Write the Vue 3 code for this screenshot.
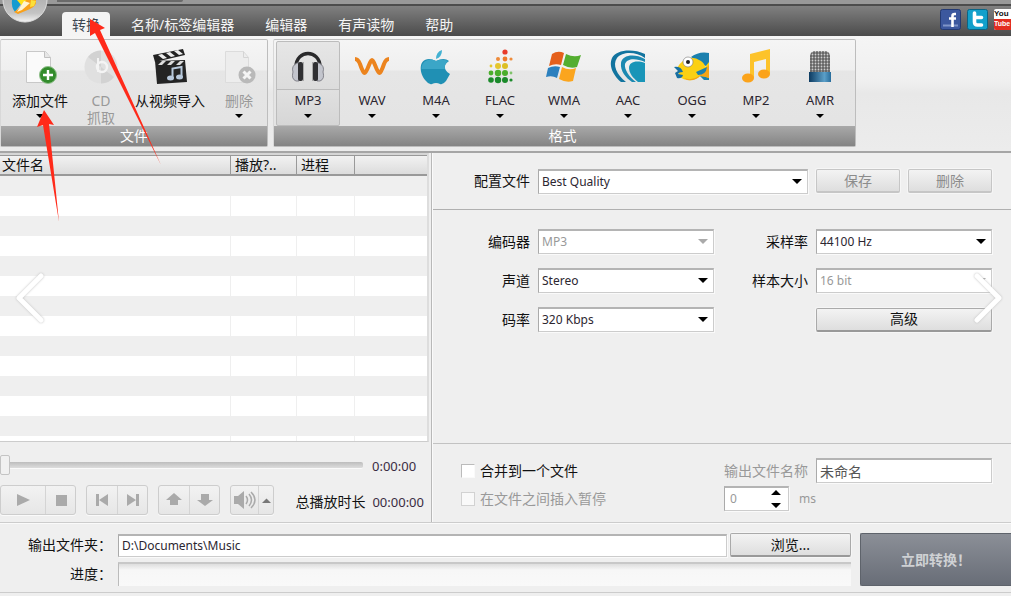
<template>
  <div class="app">
    <!-- title bar and tabs -->
    <header class="top">
      <div class="title-strip"><div class="title-slot"></div></div>
      <div class="tab-bar">
        <nav class="tabs">
          <button v-for="tab in tabs" :key="tab" class="tab" :class="{ active: tab === activeTab }" @click="activeTab = tab">
            {{ tab }}
          </button>
        </nav>
        <div class="social">
          <a href="#" aria-label="Facebook">
            <svg width="21" height="21" viewBox="0 0 21 21">
              <rect x="0.5" y="0.5" width="20" height="20" rx="2" fill="#3c589e" stroke="#243a72" />
              <path d="M3 16.5h15" stroke="#7f95c8" stroke-width="2" />
              <path d="M16 5h-1.500q-2 0-2 2v11M9 9.500h7" fill="none" stroke="#fff" stroke-width="2.600" />
            </svg>
          </a>
          <a href="#" aria-label="Twitter">
            <svg width="21" height="21" viewBox="0 0 21 21">
              <rect x="0.5" y="0.5" width="20" height="20" rx="2" fill="#12a0cb" stroke="#0b6585" />
              <path d="M7.500 4v9q0 3 3 3h4M7.500 8.500h7" fill="none" stroke="#fff" stroke-width="3.600" stroke-linecap="round" />
            </svg>
          </a>
          <a href="#" class="youtube" aria-label="YouTube"><span>You</span><span class="tube">Tube</span></a>
        </div>
      </div>
      <svg class="logo" width="46" height="24" viewBox="0 0 46 24">
        <defs>
          <linearGradient id="orb" x1="0" y1="0" x2="0" y2="1">
            <stop offset="0" stop-color="#999" />
            <stop offset="0.8" stop-color="#c4c4c4" />
            <stop offset="1" stop-color="#f4f4f4" />
          </linearGradient>
        </defs>
        <circle cx="23" cy="0" r="22" fill="url(#orb)" stroke="#ddd" stroke-width="1" />
        <path d="M10 0h12L13 12Q9 7 10 0z" fill="#159bd0" />
        <path d="M15 0h10l-5 6z" fill="#ffe11a" />
        <path d="M24 0h10q1 6-6 9l-12 5-4-2 9-6z" fill="#f9a11b" />
        <path d="M22 1l6 2-8 7-5 2z" fill="#fff3d0" />
        <path d="M29 0l5 1-2 5-4 1z" fill="#fbe03a" />
      </svg>
    </header>

    <!-- ribbon -->
    <section class="ribbon">
      <div class="group">
        <div class="group-items">
          <button class="tool tool-wide">
            <svg class="tool-icon" width="36" height="36" viewBox="0 0 36 36">
              <path d="M4.500 1.500h19l5 6v25h-24z" fill="#fafafa" stroke="#c8c8c8" />
              <path d="M22.500 1.500v6h6" fill="#e6e6e6" stroke="#c0c0c0" />
              <circle cx="26" cy="25" r="8.500" fill="#338c2c" stroke="#8fbf8a" />
              <path d="M26 20v10M21 25h10" stroke="#fff" stroke-width="2.400" />
            </svg>
            <span class="tool-text">添加文件</span>
            <i class="caret"></i>
          </button>
          <button class="tool" disabled>
            <svg class="tool-icon" width="36" height="36" viewBox="0 0 36 36">
              <circle cx="18" cy="17" r="16.500" fill="#e0e0e0" />
              <path d="M18 17L5 7A16.500 16.500 0 0 1 18 0.500zM18 17l13 10A16.500 16.500 0 0 1 18 33.500z" fill="#d2d2d2" />
              <path d="M15 8v14" stroke="#f4f4f4" stroke-width="2" />
              <circle cx="19" cy="17" r="5" fill="none" stroke="#f4f4f4" stroke-width="2.400" />
            </svg>
            <span class="tool-text">CD<br />抓取</span>
          </button>
          <button class="tool tool-video">
            <svg class="tool-icon" width="36" height="36" viewBox="0 0 36 36">
              <path d="M1 5l30-6 2 6-30 7z" fill="#222" />
              <path d="M6 5l5 4 4-1-5-4zM14 3l5 4 4-1-5-4zM22 1l5 4 4-1-5-4z" fill="#eee" />
              <path d="M3 11l30-1 2 22-30 2z" fill="#242424" />
              <path d="M6 15l4-4h4l-4 4zM15 15l4-4h4l-4 4zM24 15l4-4h4l-4 4z" fill="#ddd" />
              <path d="M20.500 28V18.500l9-1.500v10" fill="none" stroke="#b8c9dc" stroke-width="2" />
              <ellipse cx="18.500" cy="28" rx="3.500" ry="2.500" fill="#b8c9dc" />
              <ellipse cx="27.500" cy="27" rx="3.500" ry="2.500" fill="#b8c9dc" />
            </svg>
            <span class="tool-text">从视频导入</span>
          </button>
          <button class="tool" disabled>
            <svg class="tool-icon" width="36" height="36" viewBox="0 0 36 36">
              <path d="M4.500 1.500h18l5 6v25h-23z" fill="#ededed" stroke="#dcdcdc" />
              <path d="M22.500 1.500v6h5" fill="none" stroke="#d4d4d4" />
              <circle cx="26" cy="25" r="8.500" fill="#b9b9b9" />
              <path d="M22.500 21.500l7 7M29.500 21.500l-7 7" stroke="#f5f5f5" stroke-width="3" />
            </svg>
            <span class="tool-text">删除</span>
            <i class="caret"></i>
          </button>
        </div>
        <div class="group-title">文件</div>
      </div>

      <div class="group formats">
        <div class="group-items">
          <button v-for="f in formats" :key="f" class="tool format" :class="{ active: f === activeFormat }" @click="activeFormat = f">
            <svg class="tool-icon" width="36" height="36" viewBox="0 0 36 36">
              <g v-if="f === 'MP3'">
                <path d="M6 17C6-1 30-1 30 17" fill="none" stroke="#29292b" stroke-width="3.500" />
                <path d="M7 13q-6 3-4 9-2 7 3 9h3V13zM29 13q6 3 4 9 2 7-3 9h-3V13z" fill="#c3c5cd" stroke="#85858d" />
                <rect x="8" y="12" width="5" height="19" rx="2" fill="#303033" />
                <rect x="23" y="12" width="5" height="19" rx="2" fill="#303033" />
                <path d="M13.500 12v19M22.500 12v19" stroke="#aaa" />
              </g>
              <path v-else-if="f === 'WAV'" d="M1 9Q4 9 6 14Q9 23 10.500 23Q12 23 15 15Q17 10 18 10Q19 10 21 15Q24 23 25.500 23Q27 23 30 14Q32 9 35 9" fill="none" stroke="#ec841e" stroke-width="4" />
              <g v-else-if="f === 'M4A'">
                <path d="M18 11q-4-2-7-2C0 9 1 24 8 31q3 4 6 3 4-2 8 0 3 1 6-3l4-7q-6-3-5-9 1-2 4-4-5-4-13 0z" fill="#2090b4" />
                <path d="M3.500 19c0-8 8-12 14.500-8q6-3 12 0-4 4-3 8z" fill="#3ba6c7" />
                <path d="M18 9q0-7 6-9 0 7-6 9z" fill="#42b1d2" />
              </g>
              <g v-else-if="f === 'FLAC'">
                <circle v-for="(d, i) in flacDots" :key="i" :cx="d[0]" :cy="d[1]" :r="d[2]" :fill="d[3]" />
              </g>
              <g v-else-if="f === 'WMA'">
                <path d="M6 4q6-4 12-1l-3 12q-6-2-12 1z" fill="#e5601c" />
                <path d="M20 4q8 4 15 1l-4 12q-7 2-14-2z" fill="#54ae30" />
                <path d="M2 18q6-3 12-1l-3 11q-5-3-11-1z" fill="#2c80be" />
                <path d="M16 17q7 4 14 1l-3 13q-7 2-14-2z" fill="#fba51e" />
              </g>
              <g v-else-if="f === 'AAC'">
                <path d="M35 4C22-2 6 0 2 8c-4 9 3 19 9 24h5C7 25 2 15 7 8 12 2 25 1 35 8z" fill="#12749f" />
                <path d="M35 9C24 3 12 5 11 13c-1 8 5 15 11 19h4C19 27 14 19 15 14c2-6 11-6 20-2z" fill="#1c89b1" />
                <path d="M35 13c-9-3-16-1-16 5 0 5 4 10 9 14h7z" fill="#1995b8" />
              </g>
              <g v-else-if="f === 'OGG'">
                <path d="M17 7q8-6 18-4v14l-9-3zM25 25l5 5h5v-9z" fill="#1b80ae" />
                <path d="M3 18Q13 2 27 11q4 3 4 6l4-5v16q-5-2-9-2-4 5-13 4-7-1-8-6z" fill="#fbd013" />
                <path d="M10 28q8 3 15-2l10-11v13q-5-2-9-2-4 5-13 4z" fill="#f5a416" />
                <path d="M0 17q7-1 9 5-4 0-5 2l5 1q-1 4-6 3l-2-5 3-2z" fill="#176fa1" />
                <path d="M22 22l11-5q-1 8-9 8z" fill="#1b80ae" />
                <circle cx="14" cy="12" r="5" fill="#fff" stroke="#777" stroke-width="0.600" />
                <circle cx="14" cy="12" r="2" fill="#222" />
              </g>
              <g v-else-if="f === 'MP2'">
                <path d="M12 4l20-5v25h-4V9L16 12v16h-4z" fill="#fdc32a" />
                <ellipse cx="10" cy="28" rx="6" ry="4.500" fill="#fba31a" />
                <ellipse cx="26" cy="24" rx="6" ry="4.500" fill="#fba31a" />
              </g>
              <g v-else>
                <defs>
                  <pattern id="mesh" width="3" height="3" patternUnits="userSpaceOnUse">
                    <rect width="3" height="3" fill="#636363" />
                    <circle cx="1.500" cy="1.500" r="0.900" fill="#cfcfcf" />
                  </pattern>
                  <linearGradient id="mic-base">
                    <stop offset="0" stop-color="#0d3b61" />
                    <stop offset="0.7" stop-color="#5b9fc8" />
                    <stop offset="1" stop-color="#286c9b" />
                  </linearGradient>
                </defs>
                <rect x="8" y="1" width="20" height="26" rx="5" fill="url(#mesh)" />
                <rect x="7" y="22" width="22" height="10" fill="url(#mic-base)" />
              </g>
            </svg>
            <span class="tool-text latin">{{ f }}</span>
            <i class="caret"></i>
          </button>
        </div>
        <div class="group-title">格式</div>
      </div>
    </section>

    <main class="main">
      <!-- file list and player -->
      <section class="left">
        <div class="list">
          <table>
            <thead>
              <tr>
                <th class="col-name">文件名</th>
                <th class="col-play">播放?..</th>
                <th class="col-progress">进程</th>
                <th></th>
              </tr>
            </thead>
            <tbody>
              <tr v-for="n in 14" :key="n"><td></td><td></td><td></td><td></td></tr>
            </tbody>
          </table>
        </div>
        <div class="player">
          <div class="seek">
            <input v-model="position" class="slider" type="range" min="0" max="100" aria-label="播放位置" />
            <span class="time">0:00:00</span>
          </div>
          <div class="controls">
            <div class="btn-group">
              <button class="wide" aria-label="播放"><svg width="16" height="16" viewBox="0 0 16 16"><path d="M2 2l13 6-13 6z" /></svg></button>
              <button aria-label="停止"><svg width="16" height="16" viewBox="0 0 16 16"><path d="M3 3h11v11H3z" /></svg></button>
            </div>
            <div class="btn-group">
              <button aria-label="上一个"><svg width="16" height="16" viewBox="0 0 16 16"><path d="M2 2h3v12H2zM14 2v12L5 8z" /></svg></button>
              <button aria-label="下一个"><svg width="16" height="16" viewBox="0 0 16 16"><path d="M14 2h-3v12h3zM2 2v12l9-6z" /></svg></button>
            </div>
            <div class="btn-group">
              <button aria-label="上移"><svg width="16" height="16" viewBox="0 0 16 16"><path d="M8 1l8 7h-4v5H4V8H0z" /></svg></button>
              <button aria-label="下移"><svg width="16" height="16" viewBox="0 0 16 16"><path d="M8 14L0 8h4V2h8v6h4z" /></svg></button>
            </div>
            <div class="btn-group volume">
              <button aria-label="音量">
                <svg width="22" height="18" viewBox="0 0 22 18">
                  <path d="M0 5h4l6-5v18l-6-5H0z" />
                  <path d="M12 5q3 4 0 8M15 3q5 6 0 12M17 1q8 8 0 16" fill="none" stroke="#aaa" stroke-width="1.500" />
                </svg>
              </button>
              <button class="narrow" aria-label="音量菜单"><svg width="9" height="5" viewBox="0 0 9 5"><path d="M0 5l4.500-4.500L9 5z" fill="#777" /></svg></button>
            </div>
            <div class="total">
              <span>总播放时长</span>
              <span class="time">00:00:00</span>
            </div>
          </div>
        </div>
      </section>

      <!-- encoder settings -->
      <section class="right">
        <div class="profile">
          <label for="profile">配置文件</label>
          <div class="select">
            <select id="profile"><option>Best Quality</option></select>
            <i class="caret big"></i>
          </div>
          <button class="btn" disabled>保存</button>
          <button class="btn" disabled>删除</button>
        </div>
        <div class="settings">
          <template v-for="s in settings" :key="s.id">
            <label :for="s.id">{{ s.label }}</label>
            <div class="select">
              <select :id="s.id" :disabled="s.disabled"><option>{{ s.value }}</option></select>
              <i class="caret big" :class="{ off: s.disabled }"></i>
            </div>
          </template>
          <button class="btn advanced">高级</button>
        </div>
        <div class="merge">
          <label class="check"><input type="checkbox" />合并到一个文件</label>
          <div class="out-name">
            <label for="out-name" class="muted">输出文件名称</label>
            <input id="out-name" v-model="outName" class="field" type="text" />
          </div>
          <label class="check muted"><input type="checkbox" disabled />在文件之间插入暂停</label>
          <div class="pause">
            <div class="spin">
              <input v-model="pause" type="text" aria-label="暂停" disabled />
              <svg width="10" height="18" viewBox="0 0 10 18"><path d="M0 5l5-5 5 5zM0 13l5 5 5-5z" /></svg>
            </div>
            <span class="muted unit">ms</span>
          </div>
        </div>
      </section>
    </main>

    <!-- output -->
    <footer class="output">
      <div class="output-grid">
        <label for="folder">输出文件夹：</label>
        <input id="folder" v-model="folder" class="field" type="text" />
        <button class="btn">浏览...</button>
        <span class="progress-label">进度：</span>
        <div class="progress" role="progressbar" aria-label="进度"></div>
      </div>
      <button class="convert">立即转换！</button>
    </footer>

    <!-- overlay: pointers and carousel arrows -->
    <svg class="pointers" width="170" height="230" viewBox="0 0 170 230">
      <path d="M90 19l15 9-5 2 61 135L95 33l-5 3z" />
      <path d="M44 110l10 15-5-1 10 98L43 125l-6 2z" />
    </svg>
    <button class="chevron prev" aria-label="上一张">
      <svg width="36" height="56" viewBox="0 0 36 56"><path d="M30 6L8 28l22 22" /></svg>
    </button>
    <button class="chevron next" aria-label="下一张">
      <svg width="36" height="56" viewBox="0 0 36 56"><path d="M6 6l22 22L6 50" /></svg>
    </button>
  </div>
</template>

<script setup>
import { ref } from 'vue'

const tabs = ['转换', '名称/标签编辑器', '编辑器', '有声读物', '帮助']
const activeTab = ref('转换')

const formats = ['MP3', 'WAV', 'M4A', 'FLAC', 'WMA', 'AAC', 'OGG', 'MP2', 'AMR']
const activeFormat = ref('MP3')

const settings = [
  { id: 'codec', label: '编码器', value: 'MP3', disabled: true },
  { id: 'rate', label: '采样率', value: '44100 Hz', disabled: false },
  { id: 'channels', label: '声道', value: 'Stereo', disabled: false },
  { id: 'size', label: '样本大小', value: '16 bit', disabled: true },
  { id: 'bitrate', label: '码率', value: '320 Kbps', disabled: false }
]

// x, y, 半径, 颜色
const flacDots = [
  [23, 2, 2.6, '#e83b2b'],
  [16, 9, 2, '#ee8b3a'], [23, 9, 2.4, '#ee7a2b'], [29, 9, 1.6, '#ee8b3a'],
  [9, 16, 1.4, '#e5c62d'], [16, 16, 3, '#e5c62d'], [23, 16, 3, '#dcbf25'],
  [9, 23, 2.4, '#4aae2c'], [16, 23, 3.2, '#4aae2c'], [23, 23, 3, '#4aae2c'], [29, 23, 1.4, '#7fc36a'],
  [9, 30, 2.8, '#1b8a2b'], [16, 30, 3.2, '#1b8a2b'], [23, 30, 3, '#1b8a2b'], [29, 30, 1.6, '#1b8a2b']
]

const position = ref(0)
const outName = ref('未命名')
const pause = ref('0')
const folder = ref('D:\\Documents\\Music')
</script>

<style>
body {
  margin: 0;
  background: #efefef;
}
</style>

<style scoped>
.app {
  position: relative;
  display: flex;
  flex-direction: column;
  min-height: 100vh;
  overflow: hidden;
  background: #efefef;
  color: #111;
  font-family: "Noto Sans", "Noto Sans CJK SC", sans-serif;
  font-size: 14px;
  line-height: 20px;
}

.app * {
  box-sizing: border-box;
}

button,
input,
select {
  margin: 0;
  font: inherit;
  color: inherit;
}

/* 顶部 */
.top {
  position: relative;
}

.title-strip {
  height: 6px;
  padding-left: 57px;
  background: #999;
  border-bottom: 2px solid #4d4d4d;
}

.title-slot {
  width: 126px;
  height: 2px;
  border-radius: 0 0 6px 0;
  background: #6a6a6a;
}

.tab-bar {
  display: flex;
  justify-content: space-between;
  height: 30px;
  padding-left: 62px;
  background: linear-gradient(#808080, #4b4b4b);
}

.tabs {
  display: flex;
  align-items: flex-end;
  gap: 11px;
}

.tab {
  height: 24px;
  padding: 3px 10px 1px;
  border: 0;
  background: none;
  color: #f4f4f4;
  white-space: nowrap;
}

.tab.active {
  border-radius: 4px 4px 0 0;
  background: #f4f4f4;
  color: #3c4650;
}

.social {
  display: flex;
  gap: 6px;
  padding-top: 3px;
}

.social a {
  display: block;
  height: 21px;
}

.social svg {
  display: block;
}

.youtube {
  width: 17px;
  overflow: hidden;
  border-radius: 2px 0 0 2px;
  background: #fff;
  color: #111;
  font-family: "Liberation Sans", sans-serif;
  font-size: 8px;
  font-weight: 700;
  line-height: 10px;
  text-decoration: none;
}

.youtube span {
  display: block;
}

.youtube .tube {
  height: 11px;
  background: #e22d20;
  color: #fff;
  font-size: 7px;
}

.logo {
  position: absolute;
  top: 0;
  left: 2px;
}

/* 功能区 */
.ribbon {
  display: flex;
  gap: 5px;
  padding: 3px 0 4px;
  background: linear-gradient(#f5f5f5 0, #efefef 40%, #e8e8e8 50%, #ececec 100%);
  border-bottom: 2px solid #a6a6a6;
}

.group {
  flex: none;
  border: 1px solid #bdbdbd;
  border-left-color: #d8d8d8;
  border-radius: 2px;
  background: linear-gradient(#f5f5f5 0, #efefef 30px, #e6e6e6 31px, #e3e3e3 100%);
}

.group-items {
  display: flex;
  height: 86px;
  padding: 1px 5px 0 1px;
}

.formats .group-items {
  padding: 1px 3px 0 2px;
}

.group-title {
  height: 20px;
  background: linear-gradient(#a9a9a9, #848484);
  color: #fff;
  text-align: center;
}

.formats .group-title {
  padding-right: 4px;
}

.tool {
  display: flex;
  flex-direction: column;
  align-items: center;
  width: 46px;
  height: 85px;
  padding: 8px 0 0;
  border: 1px solid transparent;
  background: none;
  color: #111;
  line-height: 17px;
}

.tool-wide {
  width: 76px;
}

.tool-video {
  width: 92px;
}

.tool-icon {
  flex: none;
  margin-bottom: 6px;
  overflow: visible;
}

.tool-text {
  white-space: nowrap;
}

.tool:disabled .tool-text {
  color: #999;
}

.format {
  width: 64px;
}

.format.active {
  border-color: #bcbcbc;
  border-radius: 2px;
  background: linear-gradient(#e6e6e6 0, #dcdcdc 47px, #bcbcbc 47px, #bcbcbc 48px, #e0e0e0 48px, #d6d6d6 100%);
}

.latin {
  color: #2c2630;
  font-size: 13px;
}

.caret {
  margin-top: 5px;
  border: 4px solid transparent;
  border-top-color: #000;
  border-bottom: 0;
}

/* 主体 */
.main {
  display: flex;
  flex: 1;
  border-bottom: 1px solid #ccc;
}

.left {
  display: flex;
  flex: none;
  flex-direction: column;
  width: 432px;
  border-right: 1px solid #b8b8b8;
}

.list {
  flex: 1 1 0;
  min-height: 0;
  margin-right: 2px;
  overflow: hidden;
  border-top: 2px solid #d6d6d6;
  border-right: 2px solid #ddd;
  border-bottom: 1px solid #ccc;
}

table {
  width: 100%;
  border-collapse: separate;
  border-spacing: 0;
  table-layout: fixed;
}

th {
  height: 21px;
  padding: 0 4px;
  border-top: 1px solid #999;
  border-right: 1px solid #999;
  border-bottom: 2px solid #999;
  background: linear-gradient(#f2f2f2, #dcdcdc);
  font-weight: 400;
  line-height: 18px;
  text-align: left;
}

th:first-child {
  padding-left: 2px;
}

th:last-child,
td:last-child {
  border-right: 0;
}

.col-name {
  width: 231px;
}

.col-play {
  width: 66px;
}

.col-progress {
  width: 58px;
}

td {
  height: 20px;
  padding: 0;
  border-right: 1px solid #efefef;
  background: #fff;
}

tbody tr:nth-child(odd) td {
  background: #efefef;
}

.player {
  padding: 11px 7px 7px 0;
}

.seek {
  display: flex;
  align-items: center;
  gap: 9px;
  height: 25px;
  margin-bottom: 7px;
}

.slider {
  appearance: none;
  width: 363px;
  height: 20px;
  background: none;
}

.slider::-webkit-slider-runnable-track {
  height: 7px;
  border-bottom: 1px solid #fafafa;
  border-radius: 2px;
  background: linear-gradient(#bdbdbd, #ddd);
}

.slider::-webkit-slider-thumb {
  appearance: none;
  width: 10px;
  height: 20px;
  margin-top: -7px;
  border: 1px solid #c4c4c4;
  border-radius: 2px;
  background: #f1f1f1;
}

.time {
  color: #3a2c42;
  font-size: 13px;
}

.controls {
  display: flex;
  align-items: center;
  gap: 10px;
}

.btn-group {
  display: flex;
  height: 30px;
  border: 1px solid #cdcdcd;
  border-radius: 3px;
  background: linear-gradient(#f2f2f2, #e6e6e6);
  box-shadow: 0 1px 0 #fafafa;
}

.btn-group button {
  display: flex;
  align-items: center;
  justify-content: center;
  width: 30px;
  padding: 0;
  border: 0;
  background: none;
}

.btn-group button + button {
  border-left: 1px solid #d4d4d4;
}

.btn-group .wide {
  width: 44px;
}

.volume button {
  width: 27px;
}

.btn-group .narrow {
  width: 15px;
}

.btn-group svg {
  fill: #aaa;
}

.total {
  display: flex;
  flex: 1;
  justify-content: flex-end;
  gap: 7px;
  padding-top: 4px;
  white-space: nowrap;
}

.right {
  display: flex;
  flex: 1;
  flex-direction: column;
  border-left: 1px solid #fafafa;
}

.right label {
  text-align: right;
  white-space: nowrap;
}

.profile {
  display: flex;
  align-items: center;
  gap: 8px;
  height: 57px;
  padding: 0 19px 0 41px;
  border-bottom: 1px solid #b0b0b0;
}

.profile .select {
  flex: 1;
}

.select {
  display: grid;
  align-items: center;
}

.select select,
.select .caret {
  grid-area: 1 / 1;
}

.select select,
.field,
.spin {
  width: 100%;
  height: 25px;
  padding: 0 3px;
  border: 1px solid #ccc;
  border-top: 2px solid #b4b4b4;
  border-left-color: #aaa;
  border-radius: 0;
  background: #fff;
  color: #2c2630;
  font-size: 12px;
  line-height: 20px;
  box-shadow: 1px 1px 0 #fafafa;
}

.select select {
  appearance: none;
}

.select select:disabled {
  color: #999;
  opacity: 1;
}

.select .caret {
  justify-self: end;
  margin: 0 6px 0 0;
  pointer-events: none;
}

.caret.big {
  border-width: 5px;
  border-bottom: 0;
}

.caret.off {
  border-top-color: #aaa;
}

.btn {
  width: 84px;
  height: 24px;
  padding: 0;
  border: 1px solid #aaa;
  border-bottom: 2px solid #999;
  border-radius: 2px;
  background: linear-gradient(#f3f3f3, #dedede);
  box-shadow: 0 0 0 1px #f6f6f6;
  white-space: nowrap;
}

.btn:disabled {
  border-color: #c6c6c6;
  color: #8c8c8c;
}

.settings {
  display: grid;
  flex: 1;
  grid-template-columns: 56px minmax(120px, 1fr) 86px minmax(120px, 1fr);
  align-content: start;
  align-items: center;
  gap: 14px 8px;
  padding: 19px 19px 19px 41px;
  border-bottom: 1px solid #c2c2c2;
}

.settings .advanced {
  grid-column: 4;
  width: 100%;
}

.merge {
  display: grid;
  grid-template-columns: 1fr auto;
  align-items: center;
  gap: 3px;
  padding: 14px 19px 11px 28px;
}

.right .check {
  display: flex;
  align-items: center;
  gap: 5px;
}

.check input {
  appearance: none;
  width: 14px;
  height: 14px;
  border: 1px solid #bbb;
  border-right-color: #fafafa;
  border-bottom-color: #fafafa;
  background: #fff;
}

.check input:disabled {
  border-color: #d2d2d2;
  background: #f9f9f9;
}

.right .muted {
  color: #999;
}

.out-name {
  display: flex;
  align-items: center;
  gap: 8px;
}

.out-name .field {
  width: 176px;
  color: #555;
  font-size: 14px;
}

.pause {
  display: flex;
  align-items: center;
  gap: 10px;
}

.spin {
  display: flex;
  align-items: center;
  justify-content: space-between;
  width: 65px;
  padding: 0 7px 0 5px;
}

.spin input {
  width: 30px;
  padding: 0;
  border: 0;
  background: none;
  color: #999;
}

.unit {
  font-size: 12px;
}

/* 输出 */
.output {
  display: flex;
  gap: 9px;
  padding: 9px 0 6px;
  border-top: 1px solid #fafafa;
  border-bottom: 1px solid #ccc;
  margin-bottom: 3px;
}

.output-grid {
  display: grid;
  flex: 1;
  grid-template-columns: 113px 1fr 121px;
  align-items: center;
  gap: 5px 3px;
}

.output-grid label,
.progress-label {
  padding-right: 1px;
  text-align: right;
  white-space: nowrap;
}

.output-grid .field {
  height: 23px;
  margin-left: 2px;
  width: auto;
}

.output-grid .btn {
  width: 121px;
}

.progress {
  grid-column: 2 / 4;
  height: 24px;
  margin-left: 2px;
  border-top: 2px solid #c8c8c8;
  border-left: 1px solid #bbb;
  background: linear-gradient(#dedede 0, #f7f7f7 6px, #f9f9f9 100%);
}

.convert {
  width: 151px;
  height: 53px;
  border: 1px solid #5e636b;
  border-right: 0;
  border-radius: 2px 0 0 2px;
  background: linear-gradient(#8b8f97, #686d77);
  color: #cfd1d4;
  font-weight: 700;
}

/* 浮层 */
.pointers {
  position: absolute;
  top: 0;
  left: 0;
  fill: #ff2a1a;
  pointer-events: none;
}

.chevron {
  position: absolute;
  top: 50%;
  width: 36px;
  height: 56px;
  padding: 0;
  border: 0;
  margin-top: -28px;
  background: none;
}

.chevron svg {
  display: block;
  fill: none;
  stroke: #fff;
  stroke-width: 5;
  stroke-linecap: round;
  stroke-linejoin: round;
  filter: drop-shadow(0 0 1px #bbb);
}

.prev {
  left: 11px;
}

.next {
  right: 4px;
}
</style>
